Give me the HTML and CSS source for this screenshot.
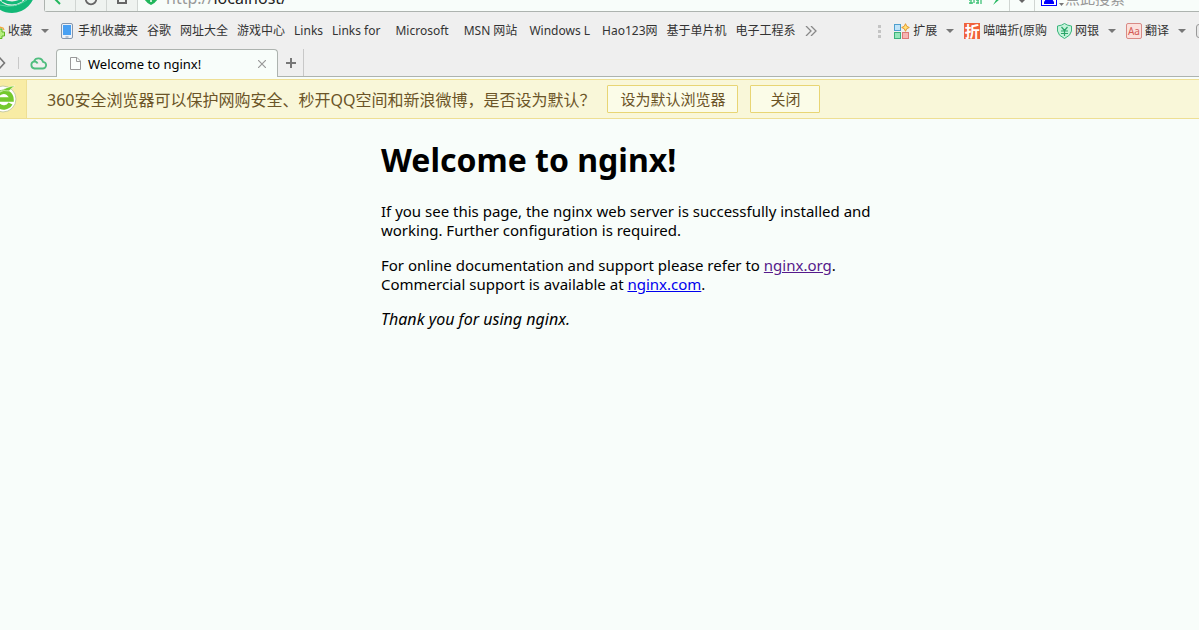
FILE: index.html
```html
<!DOCTYPE html>
<html lang="zh-CN">
<head>
<meta charset="utf-8">
<title>Welcome to nginx!</title>
<link rel="stylesheet" href="styles.css">
</head>
<body>
<header class="chrome">
  <div class="toolbar">
    <svg class="logo" width="36" height="14" viewBox="0 0 36 14"><circle cx="12" cy="-10" r="19.500" fill="none" stroke="#13b877" stroke-width="7"/><path d="M2 0Q12 6 22 0" fill="none" stroke="#13b877" stroke-width="3"/><path d="M0 5Q14 9 27 0" fill="none" stroke="#5fd6a4" stroke-width="1"/></svg>
    <div class="navbox">
      <button class="nav" aria-label="后退"><svg width="12" height="12" viewBox="0 0 12 12"><path d="M1 -1L6 4" stroke="#21b75c" stroke-width="2"/></svg></button>
      <button class="nav" aria-label="刷新"><svg width="12" height="12" viewBox="0 0 12 12"><circle cx="6" cy="-1" r="5.300" fill="none" stroke="#666" stroke-width="1.800"/></svg></button>
      <button class="nav" aria-label="主页"><svg width="12" height="12" viewBox="0 0 12 12"><path d="M2 -1V3H10V-1" fill="none" stroke="#666" stroke-width="2"/></svg></button>
      <div class="address">
        <svg width="14" height="12" viewBox="0 0 14 12"><path d="M0 -1H14Q13 3 7 6Q1 3 0 -1Z" fill="#21b75c"/><path d="M7 0V3M5 0H9" stroke="#fff" stroke-width="1.500"/></svg>
        <label class="scheme" for="url">http://</label>
        <input class="url" id="url" value="localhost/">
        <svg width="14" height="12" viewBox="0 0 14 12"><path d="M0 1H3M5 0V4M7 1H10M12 0V5M0 4H4M7 4H10M2 2V5M9 0V4" stroke="#3fc277" stroke-width="1.300"/></svg>
        <svg width="8" height="12" viewBox="0 0 8 12"><path d="M3 0H8L1 6L4 1Z" fill="#28b963"/></svg>
        <button class="drop" aria-label="历史"><svg width="8" height="12" viewBox="0 0 8 12"><path d="M0 0H8L4 4Z" fill="#666"/></svg></button>
      </div>
      <div class="search">
        <svg width="24" height="12" viewBox="0 0 24 12"><rect x=".5" y="-8" width="15" height="14.500" fill="#fff" stroke="#00f"/><path d="M5 0H11L13 3V5H3V3Z" fill="#00f"/><path d="M18 4H23L20.500 7Z" fill="#777"/></svg>
        <input class="query" aria-label="搜索" placeholder="点此搜索">
      </div>
    </div>
  </div>

  <nav class="bookmarks">
    <div class="saved">
      <svg width="8" height="16" viewBox="0 0 8 16"><path d="M-1 4L3 5L4 7" fill="none" stroke="#f4a63a" stroke-width="1.300"/><path d="M0 6H2V9H4.500V13H2V15.500H-1V6Z" fill="#b5ee80" stroke="#5eb522"/></svg>
      <a href="#">收藏</a>
      <svg class="caret" width="8" height="4"><path d="M0 0H8L4 4Z" fill="#777"/></svg>
    </div>
    <svg class="phone" width="12" height="16" viewBox="0 0 12 16"><rect x=".5" y=".5" width="11" height="15" rx="1.500" fill="#eef2f7" stroke="#8496ae"/><rect x="2" y="2" width="8" height="10" fill="#48a0f3"/><path d="M4.500 14H7.500" stroke="#8496ae"/></svg>
    <div class="links">
      <a href="#">手机收藏夹</a><a href="#">谷歌</a><a href="#">网址大全</a><a href="#">游戏中心</a><a href="#">Links</a><a class="wider" href="#">Links for</a><a class="wider" href="#">Microsoft</a><a class="wide" href="#">MSN 网站</a><a class="wide" href="#">Windows L</a><a href="#">Hao123网</a><a href="#">基于单片机</a><a href="#">电子工程系</a>
      <svg width="12" height="10" viewBox="0 0 12 10"><path d="M1 0L6 5L1 10M6 0L11 5L6 10" fill="none" stroke="#888" stroke-width="1.300"/></svg>
    </div>
    <div class="plugins">
      <svg class="grip" width="3" height="13" viewBox="0 0 3 13"><path d="M0 0H3V3H0ZM0 5H3V8H0ZM0 10H3V13H0Z" fill="#c4c4c4"/></svg>
      <a class="plugin" href="#"><svg width="16" height="16" viewBox="0 0 16 16"><rect x=".5" y="1.500" width="6" height="6" fill="#bfe3f8" stroke="#4e9fce"/><path d="M11.500 .7L12.700 3.300L15.300 4.500L12.700 5.700L11.500 8.300L10.300 5.700L7.700 4.500L10.300 3.300Z" fill="#ffe27a" stroke="#e6982c"/><rect x=".5" y="9.500" width="6" height="6" fill="#94e6ba" stroke="#3cb17a"/><rect x="8.500" y="9.500" width="6" height="6" fill="#f6b5b3" stroke="#dc7a78"/></svg>扩展<svg class="caret" width="8" height="4"><path d="M0 0H8L4 4Z" fill="#777"/></svg></a>
      <a class="plugin" href="#"><span class="zhe">折</span>喵喵折(原购</a>
      <a class="plugin" href="#"><svg width="15" height="16" viewBox="0 0 15 16"><path d="M7.500 .5Q10 2.500 14.500 3V8Q14 12.500 7.500 15.500Q1 12.500 .5 8V3Q5 2.500 7.500 .5Z" fill="#c5f3db" stroke="#3bb57c"/><path d="M4.500 4L7.500 7.500L10.500 4M4 8H11M4 10.500H11M7.500 7.500V13" fill="none" stroke="#2ba468" stroke-width="1.200"/></svg>网银<svg class="caret" width="8" height="4"><path d="M0 0H8L4 4Z" fill="#777"/></svg></a>
      <a class="plugin" href="#"><span class="aa">Aa</span>翻译<svg class="caret" width="8" height="4"><path d="M0 0H8L4 4Z" fill="#777"/></svg></a>
      <svg width="3" height="16" viewBox="0 0 3 16"><path d="M3 1.500Q.5 1.500 .5 4V12Q.5 14.500 3 14.500" fill="#e8e8e8" stroke="#999"/></svg>
    </div>
  </nav>

  <div class="tabs">
    <div class="tabtools">
      <svg width="6" height="12" viewBox="0 0 6 12"><path d="M-1 0L4.500 6L-1 12" fill="none" stroke="#777" stroke-width="1.600"/></svg>
      <span class="rule"></span>
      <svg width="17" height="14" viewBox="0 0 17 14"><path d="M4.500 12.500H12.500A3.300 3.300 0 0 0 13 5.800A4.800 4.800 0 0 0 4 5.300A3.700 3.700 0 0 0 4.500 12.500ZM4 5.300Q7 5.300 7.500 7.500" fill="none" stroke="#4fbd7e" stroke-width="1.800"/></svg>
    </div>
    <div class="tab">
      <svg width="11" height="13" viewBox="0 0 11 13"><path d="M.5 .5H7L10.500 4V12.500H.5ZM6.500 .5V4.500H10.500" fill="#fcfffd" stroke="#999"/></svg>
      <span class="title">Welcome to nginx!</span>
      <button class="close" aria-label="关闭标签"><svg width="8" height="8" viewBox="0 0 8 8"><path d="M0 0L8 8M8 0L0 8" stroke="#999" stroke-width="1.200"/></svg></button>
    </div>
    <button class="newtab" aria-label="新建标签"><svg width="10" height="10" viewBox="0 0 10 10"><path d="M5 0V10M0 5H10" stroke="#777" stroke-width="2"/></svg></button>
  </div>
</header>

<aside class="notice">
  <div class="badge"><svg width="18" height="28" viewBox="0 0 18 28"><circle cx="3" cy="14" r="13" fill="#fff" stroke="#c9cda2"/><path d="M10.500 18.500A7.800 7.800 0 1 1 11.500 14.500H-4" fill="none" stroke="#73c92d" stroke-width="4.500"/><path d="M-2 8Q7 1 15 1Q11 3 9 6Q4 4 -2 8Z" fill="#73c92d" stroke="#fff" stroke-width=".5"/></svg></div>
  <span class="message">360安全浏览器可以保护网购安全、秒开QQ空间和新浪微博，是否设为默认？</span>
  <button class="action">设为默认浏览器</button>
  <button class="action dismiss">关闭</button>
</aside>

<main class="page">
  <h1>Welcome to nginx!</h1>
  <p>If you see this page, the nginx web server is successfully installed and working. Further configuration is required.</p>
  <p>For online documentation and support please refer to <a class="visited" href="#">nginx.org</a>.<br>Commercial support is available at <a href="#">nginx.com</a>.</p>
  <p class="thanks"><em>Thank you for using nginx.</em></p>
</main>
</body>
</html>
```

FILE: styles.css
```css
* { box-sizing: border-box; }
body {
  margin: 0;
  background: #f8fdfa;
  font-family: "Noto Sans", "Noto Sans CJK SC", sans-serif;
  color: #000;
}
button { border: 0; background: none; padding: 0; font: inherit; color: inherit; }
input { border: 0; background: none; padding: 0; outline: 0; min-width: 0; font: inherit; }
svg { display: block; flex: none; }
.chrome {
  background: #efefef;
  font-size: 12px;
  color: #333;
}

.toolbar { display: flex; height: 14px; overflow: hidden; }
.navbox {
  display: flex;
  flex: 1;
  height: 12px;
  margin-left: 8px;
  border: 1px solid #adb3af;
  border-width: 0 0 1px 1px;
  border-bottom-left-radius: 3px;
  background: #f8fdfa;
}
.nav {
  display: flex;
  justify-content: center;
  width: 31px;
  background: #eff3f0;
  border-right: 1px solid #d0d5d2;
}
.address { display: flex; flex: 1; padding-left: 6px; align-items: flex-end; font-size: 16px; line-height: 26px; }
.scheme { color: #999; margin-left: 8px; }
.url { flex: 1; height: 26px; color: #222; }
.address svg + svg { margin-left: 9px; }
.drop { display: flex; justify-content: center; width: 26px; margin-left: 9px; border-left: 1px solid #d0d5d2; border-right: 1px solid #d0d5d2; }
.search { display: flex; align-items: flex-end; width: 164px; padding-left: 6px; }
.query { flex: 1; height: 26px; font-size: 15px; }
.query::placeholder { color: #999; }

.bookmarks { display: flex; align-items: center; height: 34px; overflow: hidden; white-space: nowrap; line-height: 18px; }
.bookmarks a { color: #333; text-decoration: none; }
.saved { display: flex; align-items: center; }
.caret { margin-left: 9px; }
.phone { margin-left: 12px; margin-right: 5px; }
.links { display: flex; align-items: center; gap: 9px; }
.links .wide { margin-right: 3px; }
.links .wider { margin-right: 6px; }
.plugins { display: flex; align-items: center; gap: 10px; margin-left: auto; }
.plugin { display: flex; align-items: center; gap: 3px; }
.plugin .caret { margin-left: 6px; }
.grip { margin-right: 3px; }
.zhe { width: 16px; height: 16px; background: #f0623a; color: #fff; font-size: 15px; line-height: 16px; text-align: center; font-weight: bold; }
.aa { width: 16px; height: 16px; border: 1px solid #d98a85; border-radius: 2px; background: #fbe0dc; color: #d45a55; font-size: 10px; line-height: 14px; text-align: center; }

.tabs { display: flex; align-items: flex-end; height: 29px; border-bottom: 1px solid #adb3af; }
.tabtools { display: flex; align-items: center; gap: 11px; width: 56px; height: 26px; }
.rule { width: 1px; height: 12px; margin-left: 1px; background: #c8c8c8; }
.tab {
  display: flex;
  align-items: center;
  width: 222px;
  height: 28px;
  margin-bottom: -1px;
  padding: 0 11px 0 13px;
  border: 1px solid #adb3af;
  border-bottom: 0;
  border-radius: 4px 4px 0 0;
  background: #f8fdfa;
  color: #000;
}
.title { flex: 1; margin-left: 7px; font-size: 13px; line-height: 18px; }
.newtab {
  display: flex;
  align-items: center;
  justify-content: center;
  width: 26px;
  height: 27px;
  border-right: 1px solid #c8c8c8;
}

.notice {
  display: flex;
  align-items: center;
  height: 40px;
  margin-top: 2px;
  border: 1px solid #eedf94;
  border-width: 1px 0;
  background: #f9f7d9;
  color: #6b5427;
}
.badge { display: flex; align-items: center; width: 27px; height: 38px; background: #f8eca5; border-right: 1px solid #eedf94; }
.message { margin: 0 12px 0 20px; font-size: 16px; white-space: nowrap; }
.action {
  height: 28px;
  margin-right: 12px;
  padding: 0 12px;
  border: 1px solid #e8d574;
  border-radius: 1px;
  background: #fbfce8;
  font-size: 15px;
  line-height: 20px;
}
.dismiss { padding: 0 19px; }

.page {
  max-width: 900px;
  padding: 21px 0 0 381px;
  font-size: 15px;
  line-height: 19px;
}
.page h1 { margin: 0 0 22px; font-size: 32px; line-height: 40px; }
.page p { margin: 0 0 16px; }
.page .thanks { font-size: 16px; }
.page a { color: #00e; }
.page .visited { color: #551a8b; }
```
